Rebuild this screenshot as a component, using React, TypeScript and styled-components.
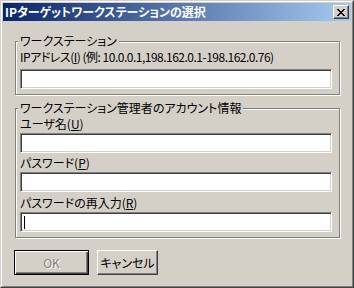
import React from 'react'
import styled, { createGlobalStyle } from 'styled-components'

const GlobalStyle = createGlobalStyle`
  html, body {
    margin: 0;
    padding: 0;
    background: #d4d0c8;
  }
  body {
    font-family: "Noto Sans CJK JP", "Liberation Sans", sans-serif;
    font-size: 12px;
    color: #000;
    font-feature-settings: "palt";
  }
`

const Window = styled.div`
  box-sizing: border-box;
  width: 354px;
  height: 288px;
  display: flex;
  background: #d4d0c8;
  border: 1px solid;
  border-color: #d4d0c8 #404040 #404040 #d4d0c8;
`

const Frame = styled.div`
  flex: 1;
  min-width: 0;
  display: flex;
  flex-direction: column;
  padding: 1px;
  border: 1px solid;
  border-color: #fff #808080 #808080 #fff;
`

const TitleBar = styled.div`
  flex: none;
  height: 18px;
  display: flex;
  align-items: center;
  padding: 0 2px;
  background: linear-gradient(to right, #0a246a, #a6caf0);
`

const Title = styled.span`
  flex: 1;
  color: #fff;
  font-size: 12px;
  font-weight: 700;
  line-height: 18px;
  white-space: nowrap;
`

const CloseButton = styled.div`
  box-sizing: border-box;
  width: 16px;
  height: 14px;
  display: flex;
  align-items: center;
  justify-content: center;
  background: #d4d0c8;
  border: 1px solid;
  border-color: #fff #404040 #404040 #fff;
  box-shadow: inset -1px -1px 0 #808080, inset 1px 1px 0 #d4d0c8;
`

const Content = styled.div`
  flex: 1;
  display: flex;
  flex-direction: column;
  padding: 13px 11px 0 12px;
`

const GroupBox = styled.fieldset<{ $pad: string; $top?: number }>`
  margin: ${(p) => p.$top ?? 0}px 0 0 0;
  min-width: 0;
  padding: ${(p) => p.$pad};
  display: flex;
  flex-direction: column;
  border: 1px solid #808080;
  box-shadow: 1px 1px 0 #fff, inset 1px 1px 0 #fff;
`

// text sits 1px above the etched line, as in the original
const Legend = styled.legend`
  margin-left: -2px;
  padding: 0 2px 2px;
  line-height: 13px;
  background: #d4d0c8;
  white-space: nowrap;
`

const Field = styled.div<{ $gap?: number }>`
  display: flex;
  flex-direction: column;
  margin-top: ${(p) => p.$gap ?? 0}px;
`

const Label = styled.div<{ $mb?: number; $tight?: boolean }>`
  height: 14px;
  line-height: 14px;
  margin-bottom: ${(p) => p.$mb ?? 2}px;
  letter-spacing: ${(p) => (p.$tight ? '-0.5px' : 'normal')};
  white-space: nowrap;
`

const TextBox = styled.div`
  box-sizing: border-box;
  height: 20px;
  padding: 3px;
  background: #fff;
  border: 1px solid;
  border-color: #808080 #fff #fff #808080;
  box-shadow: inset 1px 1px 0 #404040, inset -1px -1px 0 #d4d0c8;
`

const Caret = styled.span`
  display: block;
  width: 1px;
  height: 13px;
  background: #000;
`

const ButtonRow = styled.div`
  display: flex;
  gap: 8px;
  margin: 12px 0 0 -1px;
`

const Button = styled.div<{ $w: number; $default?: boolean; $disabled?: boolean }>`
  box-sizing: border-box;
  width: ${(p) => p.$w}px;
  height: 25px;
  display: flex;
  align-items: center;
  justify-content: center;
  background: #d4d0c8;
  border: 1px solid;
  border-color: ${(p) => (p.$default ? '#000' : '#fff #404040 #404040 #fff')};
  box-shadow: ${(p) =>
    p.$default
      ? 'inset 1px 1px 0 #fff, inset -1px -1px 0 #404040, inset -2px -2px 0 #808080'
      : 'inset -1px -1px 0 #808080, inset 1px 1px 0 #d4d0c8'};
  color: ${(p) => (p.$disabled ? '#808080' : '#000')};
  text-shadow: ${(p) => (p.$disabled ? '1px 1px 0 #fff' : 'none')};
  line-height: 14px;
`

const CloseIcon = () => (
  <svg width="8" height="7" viewBox="0 0 8 7" shapeRendering="crispEdges">
    <path
      d="M0 0h2v1h-2zM6 0h2v1h-2zM1 1h2v1h-2zM5 1h2v1h-2zM2 2h4v1h-4zM3 3h2v1h-2zM2 4h4v1h-4zM1 5h2v1h-2zM5 5h2v1h-2zM0 6h2v1h-2zM6 6h2v1h-2z"
      fill="#000"
    />
  </svg>
)

export default function App() {
  return (
    <>
      <GlobalStyle />
      <Window>
        <Frame>
          <TitleBar>
            <Title>IPターゲットワークステーションの選択</Title>
            <CloseButton>
              <CloseIcon />
            </CloseButton>
          </TitleBar>
          <Content>
            <GroupBox $pad="1px 7px 5px 4px">
              <Legend>ワークステーション</Legend>
              <Label $mb={5} $tight>
                IPアドレス(<u>I</u>) (例: 10.0.0.1,198.162.0.1-198.162.0.76)
              </Label>
              <TextBox />
            </GroupBox>
            <GroupBox $pad="1px 7px 5px 4px" $top={6}>
              <Legend>ワークステーション管理者のアカウント情報</Legend>
              <Field>
                <Label>
                  ユーザ名(<u>U</u>)
                </Label>
                <TextBox />
              </Field>
              <Field $gap={3}>
                <Label>
                  パスワード(<u>P</u>)
                </Label>
                <TextBox />
              </Field>
              <Field $gap={4}>
                <Label>
                  パスワードの再入力(<u>R</u>)
                </Label>
                <TextBox>
                  <Caret />
                </TextBox>
              </Field>
            </GroupBox>
            <ButtonRow>
              <Button $w={75} $default $disabled>
                OK
              </Button>
              <Button $w={61}>キャンセル</Button>
            </ButtonRow>
          </Content>
        </Frame>
      </Window>
    </>
  )
}
